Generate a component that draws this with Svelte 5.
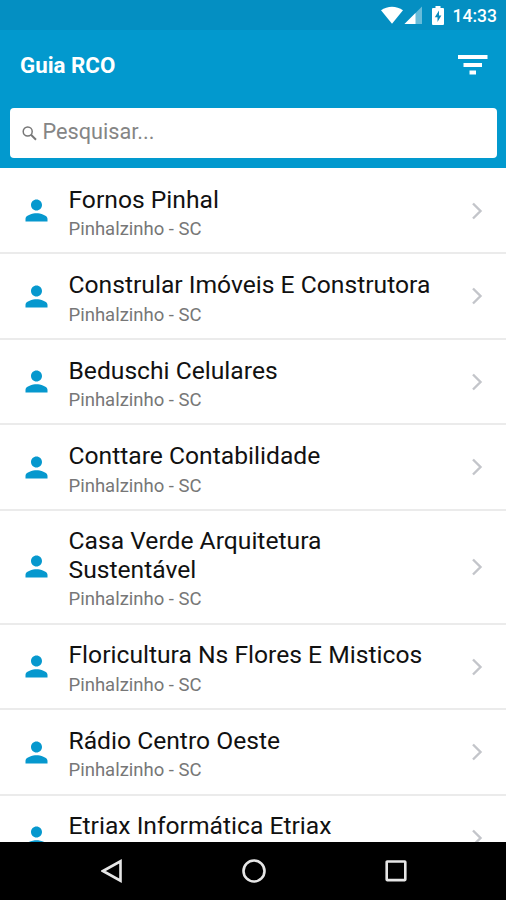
<script>
  const city = 'Pinhalzinho - SC';
  const companies = [
    { name: 'Fornos Pinhal', city },
    { name: 'Constrular Imóveis E Construtora', city },
    { name: 'Beduschi Celulares', city },
    { name: 'Conttare Contabilidade', city },
    { name: 'Casa Verde Arquitetura Sustentável', city },
    { name: 'Floricultura Ns Flores E Misticos', city },
    { name: 'Rádio Centro Oeste', city },
    { name: 'Etriax Informática Etriax', city: '' }
  ];
</script>

<div class="screen">
  <header>
    <div class="status">
      <svg width="41" height="20" viewBox="0 0 41 20" fill="#fff">
        <path d="M0 5.200C6.500.5 15.500.5 22 5.200L11 18.800Z" />
        <path d="M41 1.500V19H23.500Z" opacity=".4" />
        <path d="M34.500 8V19H23.500Z" />
      </svg>
      <svg class="battery" width="12" height="19" viewBox="0 0 12 19">
        <path d="M3.500 0h5v2H11q1 0 1 1v15q0 1-1 1H1q-1 0-1-1V3q0-1 1-1h2.500Z" fill="#fff" />
        <path d="M7 4.500 2.800 11.200H5.500V16L9.400 9.400H7Z" fill="#078bbe" />
      </svg>
      <span class="clock">14:33</span>
    </div>
    <div class="toolbar">
      <h1>Guia RCO</h1>
      <svg width="30" height="20" viewBox="0 0 30 20" fill="#fff">
        <path d="M0 0H29.500V4H0ZM5.500 8H24V12H5.500ZM11.500 15.500H18V19.500H11.500Z" />
      </svg>
    </div>
    <div class="search">
      <svg width="15" height="15" viewBox="0 0 15 15" fill="none" stroke="#777" stroke-width="1.500">
        <circle cx="5.700" cy="5.500" r="4.500" />
        <path d="M9 8.800 14 13.800" stroke-width="2" />
      </svg>
      <span>Pesquisar...</span>
    </div>
  </header>

  <main>
    {#each companies as company}
      <div class="row">
        <svg class="person" width="33" height="33" viewBox="0 0 24 24" fill="#0698ce">
          <path d="M12 12c2.210 0 4-1.790 4-4s-1.790-4-4-4-4 1.790-4 4 1.790 4 4 4zm0 2c-2.670 0-8 1.340-8 4v2h16v-2c0-2.660-5.330-4-8-4z" />
        </svg>
        <div class="text">
          <div class="name">{company.name}</div>
          <div class="city">{company.city}</div>
        </div>
        <svg class="chevron" width="12" height="18" viewBox="0 0 12 18" fill="none" stroke="#c3c5ca" stroke-width="2.400">
          <path d="M2 1.500 9.500 9 2 16.500" />
        </svg>
      </div>
    {/each}
  </main>

  <nav>
    <svg width="22" height="24" viewBox="0 0 22 24"><path d="M2 12 19.500 2.300V21.700Z" /></svg>
    <svg width="24" height="24" viewBox="0 0 24 24"><circle cx="12" cy="12" r="10.500" /></svg>
    <svg width="22" height="24" viewBox="0 0 22 24"><rect x="1.700" y="2.500" width="18.600" height="18.600" rx=".5" /></svg>
  </nav>
</div>

<style>
  .screen {
    width: 506px;
    height: 900px;
    display: flex;
    flex-direction: column;
    overflow: hidden;
    background: #fff;
    font-family: Roboto, sans-serif;
  }
  svg { display: block; flex: none; }
  header {
    height: 168px;
    flex: none;
    background: #0299ce;
  }
  .status {
    height: 30px;
    box-sizing: border-box;
    padding-right: 9px;
    background: #048fc2;
    display: flex;
    justify-content: flex-end;
    align-items: center;
  }
  .battery { margin-left: 10px; }
  .clock {
    margin-left: 9px;
    color: #fff;
    font-size: 17.500px;
    font-weight: 500;
    line-height: 30px;
    padding-top: 1px;
  }
  .toolbar {
    height: 78px;
    box-sizing: border-box;
    padding: 0 18px 8px 20px;
    display: flex;
    align-items: center;
    justify-content: space-between;
  }
  h1 {
    margin: 0;
    color: #fff;
    font-size: 22.300px;
    line-height: 30px;
    font-weight: 700;
  }
  .search {
    height: 50px;
    margin: 0 9px 0 10px;
    box-sizing: border-box;
    padding: 0 13px 3px 12px;
    background: #fff;
    border-radius: 4px;
    display: flex;
    align-items: center;
    gap: 5.500px;
    color: #858585;
    font-size: 21.700px;
  }
  .search svg { margin-top: 4px; }
  main {
    flex: 1;
    min-height: 0;
    overflow: hidden;
    padding-top: 1px;
  }
  .row {
    box-sizing: border-box;
    padding: 16.700px 23px 11.250px 19px;
    border-bottom: 2px solid #ebebeb;
    display: flex;
    align-items: center;
  }
  .person { margin: -5px 16.500px 0 .5px; }
  .chevron { margin-top: -5px; }
  .text { flex: 1; min-width: 0; padding-right: 30px; }
  .name {
    font-size: 24.650px;
    line-height: 28.500px;
    color: #111;
    margin-left: -.5px;
  }
  .city {
    height: 27px;
    font-size: 18.500px;
    line-height: 31px;
    color: #777;
    margin-left: -.5px;
  }
  nav {
    height: 58px;
    flex: none;
    box-sizing: border-box;
    background: #000;
    display: flex;
    align-items: center;
    justify-content: space-between;
    padding: 0 99px 0 101px;
  }
  nav svg { fill: none; stroke: #e6e6e6; stroke-width: 2.600; }
</style>
